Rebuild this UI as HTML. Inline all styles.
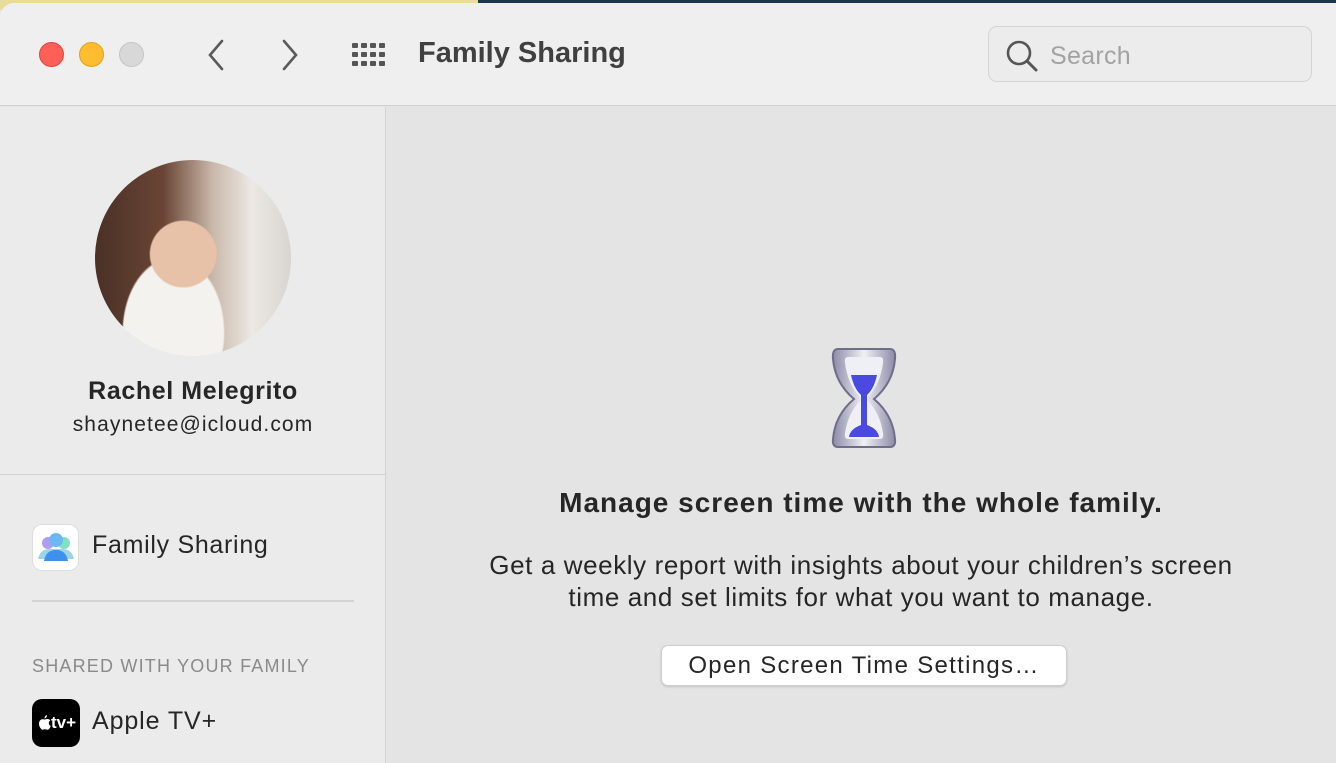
<!DOCTYPE html><html><head><style>
*{margin:0;padding:0;box-sizing:border-box}
body{width:1336px;height:752px;overflow:hidden;position:relative;background:#e4e4e4;font-family:"Liberation Sans",sans-serif;color:#262626}
.topbg{position:absolute;left:0;top:0;width:478px;height:10px;background:#e9dc9a}
.topbg2{position:absolute;left:478px;top:0;width:858px;height:10px;background:#1d3550}
.win{position:absolute;left:0;top:3px;width:1336px;height:760px;background:#e4e4e4;border-top-left-radius:14px;overflow:hidden}
.tb{position:absolute;left:0;top:0;width:1336px;height:103px;background:#efefef;border-bottom:1px solid #cfcfcf}
.dot{position:absolute;top:39px;width:25px;height:25px;border-radius:50%}
.side{position:absolute;left:0;top:104px;width:386px;height:660px;background:#ebebeb;border-right:1px solid #d2d2d2}
.t{position:absolute;white-space:nowrap}
</style></head><body>
<div class="topbg"></div><div class="topbg2"></div>
<div class="win">
<div class="tb">
<div class="dot" style="left:39px;background:#fe5f57;border:1px solid #e0443e"></div>
<div class="dot" style="left:79px;background:#febc2e;border:1px solid #dea123"></div>
<div class="dot" style="left:119px;background:#d8d8d8;border:1px solid #c4c4c4"></div>
<svg style="position:absolute;left:200px;top:35px" width="30" height="34"><path d="M22 3 L10 17 L22 31" stroke="#5a5a5a" stroke-width="2.6" fill="none" stroke-linecap="round"/></svg>
<svg style="position:absolute;left:276px;top:35px" width="30" height="34"><path d="M8 3 L20 17 L8 31" stroke="#5a5a5a" stroke-width="2.6" fill="none" stroke-linecap="round"/></svg>
<svg style="position:absolute;left:352px;top:38px" width="38" height="30" fill="#555"><rect x="0" y="2" width="6" height="5" rx="1"/><rect x="9" y="2" width="6" height="5" rx="1"/><rect x="18" y="2" width="6" height="5" rx="1"/><rect x="27" y="2" width="6" height="5" rx="1"/><rect x="0" y="11" width="6" height="5" rx="1"/><rect x="9" y="11" width="6" height="5" rx="1"/><rect x="18" y="11" width="6" height="5" rx="1"/><rect x="27" y="11" width="6" height="5" rx="1"/><rect x="0" y="20" width="6" height="5" rx="1"/><rect x="9" y="20" width="6" height="5" rx="1"/><rect x="18" y="20" width="6" height="5" rx="1"/><rect x="27" y="20" width="6" height="5" rx="1"/></svg>
<div class="t" style="left:418px;top:34px;font-size:29px;font-weight:bold;color:#404040">Family Sharing</div>
<div style="position:absolute;left:988px;top:23px;width:324px;height:56px;border:1px solid #d4d4d4;border-radius:9px;background:#ececec"></div>
<svg style="position:absolute;left:1004px;top:35px" width="36" height="36"><circle cx="15" cy="15" r="11" stroke="#555" stroke-width="2.6" fill="none"/><path d="M23 23 L32 32" stroke="#555" stroke-width="3" stroke-linecap="round"/></svg>
<div class="t" style="left:1050px;top:39px;font-size:25px;color:#a2a2a2;letter-spacing:.3px">Search</div>
</div>
<div class="side">
<div style="position:absolute;left:95px;top:53px;width:196px;height:196px;border-radius:50%;background:radial-gradient(circle at 45% 48%,#e8c2a8 0 22%,transparent 23%),radial-gradient(ellipse at 40% 88%,#f4f2ee 0 30%,transparent 31%),linear-gradient(90deg,#4a3026 0%,#6a4535 35%,#c9b8aa 60%,#ece8e3 80%,#d8d4d0 100%)"></div>
<div class="t" style="left:0;width:386px;text-align:center;top:270px;font-size:25px;font-weight:bold;letter-spacing:.6px">Rachel Melegrito</div>
<div class="t" style="left:0;width:386px;text-align:center;top:306px;font-size:21px;letter-spacing:1.1px">shaynetee@icloud.com</div>
<div style="position:absolute;left:0;top:367px;width:386px;height:1px;background:#d2d2d2"></div>
<div style="position:absolute;left:32px;top:417px;width:47px;height:47px;border-radius:10px;background:#fff;border:1px solid #ddd"></div>
<svg style="position:absolute;left:36px;top:424px" width="40" height="32"><circle cx="12" cy="12" r="6" fill="#b09cf0"/><circle cx="28" cy="12" r="6" fill="#7fe0c4"/><circle cx="20" cy="9" r="7" fill="#6cb8f2"/><path d="M2 28 Q4 18 14 18 L26 18 Q36 18 38 28 Z" fill="#9bd4e8"/><path d="M8 30 Q10 19 20 19 Q30 19 32 30 Z" fill="#3f8fec"/></svg>
<div class="t" style="left:92px;top:424px;font-size:25px;letter-spacing:.7px">Family Sharing</div>
<div style="position:absolute;left:32px;top:493px;width:322px;height:2px;background:#d4d4d4"></div>
<div class="t" style="left:32px;top:549px;font-size:18px;color:#8a8a8a;letter-spacing:1.2px">SHARED WITH YOUR FAMILY</div>
<div style="position:absolute;left:32px;top:592px;width:48px;height:48px;border-radius:10px;background:#000;color:#fff;font-size:17px;font-weight:bold;line-height:48px"><svg style="position:absolute;left:7px;top:16px" width="12" height="15" viewBox="0 0 12 15"><path d="M8 0 Q8 3 5.5 3.5 Q5.5 1 8 0Z M6 4.5 Q7.5 3.8 9 4 Q10.5 4.3 11.3 5.5 Q9.7 6.5 9.8 8.3 Q10 10.3 11.7 11 Q11 13 9.8 14.2 Q9 15 8 14.6 Q7 14.2 6 14.2 Q5 14.2 4 14.6 Q3 15 2 13.8 Q0 11.5 0 8.5 Q0.2 5 3 4.3 Q4.5 4 6 4.5Z" fill="#fff"/></svg><span style="position:absolute;left:19px;top:0">tv+</span></div>
<div class="t" style="left:92px;top:600px;font-size:25px;letter-spacing:.9px">Apple TV+</div>
</div>
<svg style="position:absolute;left:828px;top:344px" width="72" height="104"><defs><linearGradient id="g" x1="0" x2="1"><stop offset="0" stop-color="#8b8ba8"/><stop offset=".5" stop-color="#f0f0f4"/><stop offset="1" stop-color="#8b8ba8"/></linearGradient></defs><path d="M10 2 L62 2 Q68 2 67 12 Q65 36 46 52 Q65 68 67 92 Q68 100 62 100 L10 100 Q4 100 5 92 Q7 68 26 52 Q7 36 5 12 Q4 2 10 2Z" fill="url(#g)" stroke="#6e6e8a" stroke-width="2"/><path d="M20 10 L52 10 Q56 10 55 16 Q52 38 40 50 L40 54 Q52 66 55 86 Q56 92 52 92 L20 92 Q16 92 17 86 Q20 66 32 54 L32 50 Q20 38 17 16 Q16 10 20 10Z" fill="#eef0f6"/><path d="M23 28 L49 28 Q46 42 39 48 L39 78 Q50 82 51 90 L21 90 Q22 82 33 78 L33 48 Q26 42 23 28Z" fill="#4a4ae0"/></svg>
<div class="t" style="left:386px;width:950px;text-align:center;top:484px;font-size:28px;font-weight:bold;letter-spacing:1px">Manage screen time with the whole family.</div>
<div class="t" style="left:386px;width:950px;text-align:center;top:546px;font-size:26px;line-height:32px;letter-spacing:.6px">Get a weekly report with insights about your children’s screen<br>time and set limits for what you want to manage.</div>
<div style="position:absolute;left:661px;top:642px;width:406px;height:41px;background:#fff;border:1px solid #cfcfcf;border-radius:7px;box-shadow:0 1px 2px rgba(0,0,0,.15);text-align:center;font-size:24px;line-height:39px;letter-spacing:1.3px">Open Screen Time Settings…</div>
</div>
</body></html>
